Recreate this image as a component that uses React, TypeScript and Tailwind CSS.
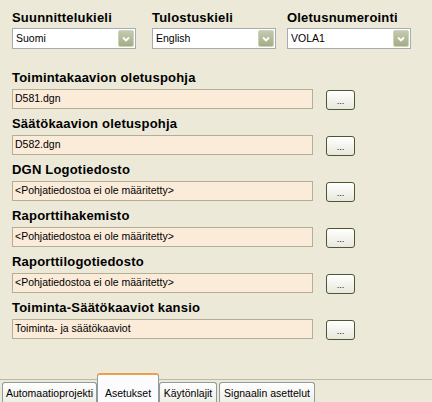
import React from "react";

const combos = [
  { label: "Suunnittelukieli", value: "Suomi", cls: "" },
  { label: "Tulostuskieli", value: "English", cls: "ml-[16px]" },
  { label: "Oletusnumerointi", value: "VOLA1", cls: "ml-[11px]" },
];

const paths = [
  { label: "Toimintakaavion oletuspohja", value: "D581.dgn" },
  { label: "Säätökaavion oletuspohja", value: "D582.dgn" },
  { label: "DGN Logotiedosto", value: "<Pohjatiedostoa ei ole määritetty>" },
  { label: "Raporttihakemisto", value: "<Pohjatiedostoa ei ole määritetty>" },
  { label: "Raporttilogotiedosto", value: "<Pohjatiedostoa ei ole määritetty>" },
  { label: "Toiminta-Säätökaaviot kansio", value: "Toiminta- ja säätökaaviot" },
];

function Combo({ label, value, cls }: { label: string; value: string; cls: string }) {
  return (
    <div className={`w-[124px] ${cls}`}>
      <div className="h-4 text-[13px] leading-4 font-bold tracking-[0.2px]">{label}</div>
      <div className="mt-[2px] h-[21px] border border-[#A5ACB2] bg-white flex items-center">
        <span className="pl-[3px] text-[10.5px]">{value}</span>
        <div className="ml-auto mr-[1px] w-[16px] h-[17px] rounded-[2px] bg-gradient-to-b from-[#C3CAAE] to-[#A4AD87] border border-[#CDD3BB] flex items-center justify-center">
          <svg width="8" height="6" viewBox="0 0 8 6">
            <path d="M1 1.5 L4 4.5 L7 1.5" stroke="#fff" strokeWidth="1.8" fill="none" />
          </svg>
        </div>
      </div>
    </div>
  );
}

function PathRow({ label, value }: { label: string; value: string }) {
  return (
    <div>
      <div className="h-4 text-[13px] leading-4 font-bold tracking-[0.2px]">{label}</div>
      <div className="mt-[3px] flex">
        <div className="w-[301px] h-[20px] border border-[#B4AE96] bg-[#FBEBD9] flex items-center pl-[2px] text-[10.5px]">
          {value}
        </div>
        <button className="ml-[13px] mt-[1px] w-[29px] h-[20px] rounded-[3px] border border-[#4B5734] bg-gradient-to-b from-white to-[#E9E8DD] text-[9px] leading-none flex items-center justify-center pt-[3px]">
          ...
        </button>
      </div>
    </div>
  );
}

export default function App() {
  return (
    <div className="w-[432px] h-[402px] bg-[#ECE9D8] flex flex-col overflow-hidden text-black font-['Liberation_Sans',Arial,sans-serif]">
      <div className="flex pl-[12px] pt-[10px]">
        {combos.map((c) => (
          <Combo key={c.label} {...c} />
        ))}
      </div>

      <div className="mt-[21px] pl-[12px] flex flex-col gap-[6px]">
        {paths.map((p) => (
          <PathRow key={p.label} {...p} />
        ))}
      </div>

      <div className="flex-1" />

      <div className="h-[23px] border-t border-[#BCB9A9] flex items-start pl-[2px] text-[10.5px]">
        <div className="mt-[2px] w-[95px] h-[21px] border border-b-0 border-[#919B9C] rounded-t-[3px] bg-gradient-to-b from-white to-[#EEEDE5] flex items-start justify-center pt-[3px]">
          Automaatioprojekti
        </div>
        <div className="relative z-10 -mt-[7px] w-[62px] h-[30px] border-x border-[#919B9C] border-t-[2px] border-t-[#E8A04A] rounded-t-[3px] bg-[#FCFCFE] flex items-start justify-center pt-[11px]">
          Asetukset
        </div>
        <div className="mt-[2px] w-[58px] h-[21px] border border-b-0 border-[#919B9C] rounded-t-[3px] bg-gradient-to-b from-white to-[#EEEDE5] flex items-start justify-center pt-[3px]">
          Käytönlajit
        </div>
        <div className="ml-[2px] mt-[2px] w-[96px] h-[21px] border border-b-0 border-[#919B9C] rounded-t-[3px] bg-gradient-to-b from-white to-[#EEEDE5] flex items-start justify-center pt-[3px]">
          Signaalin asettelut
        </div>
      </div>
    </div>
  );
}
